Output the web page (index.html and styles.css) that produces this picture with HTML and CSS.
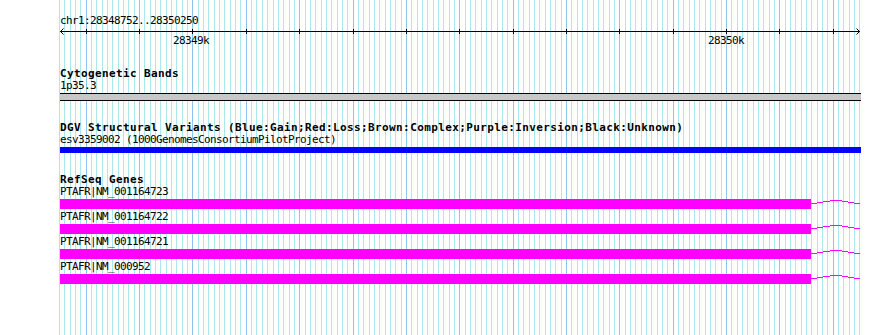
FILE: index.html
```html
<!DOCTYPE html>
<html>
<head>
<meta charset="utf-8">
<title>Browser view</title>
<link rel="stylesheet" href="styles.css">
</head>
<body>
<div class="view">
  <svg class="grid" id="grid" width="890" height="335" shape-rendering="crispEdges"></svg>
  <div class="ruler">
    <div class="loc">chr1:28348752..28350250</div>
    <svg class="axis" id="axis" width="890" height="18" shape-rendering="crispEdges">
      <line x1="60" y1="3.5" x2="860" y2="3.5" class="ax"/>
      <path d="M63.5 0.5 L60.5 3.5 L63.5 6.5 M856.5 0.5 L859.5 3.5 L856.5 6.5" class="ax" fill="none" shape-rendering="auto"/>
      <g id="ticks"></g>
      <text x="191" y="16" class="lbl" text-anchor="middle">28349k</text>
      <text x="726" y="16" class="lbl" text-anchor="middle">28350k</text>
    </svg>
  </div>

  <section class="track">
    <div class="track-title">Cytogenetic Bands</div>
    <div class="feat-label">1p35.3</div>
    <div class="band"></div>
  </section>

  <section class="track">
    <div class="track-title">DGV Structural Variants (Blue:Gain;Red:Loss;Brown:Complex;Purple:Inversion;Black:Unknown)</div>
    <div class="feat-label">esv3359002 (1000GenomesConsortiumPilotProject)</div>
    <div class="dgv-bar"></div>
  </section>

  <section class="track">
    <div class="track-title">RefSeq Genes</div>
    <div class="gene">
      <div class="feat-label gene-label">PTAFR|NM_001164723</div>
      <svg class="gene-glyph" width="801" height="10" shape-rendering="crispEdges"><rect x="0" y="0" width="751" height="10" class="exon"/><polyline points="751,5 776,1 800,5" class="intron"/></svg>
    </div>
    <div class="gene">
      <div class="feat-label gene-label">PTAFR|NM_001164722</div>
      <svg class="gene-glyph" width="801" height="10" shape-rendering="crispEdges"><rect x="0" y="0" width="751" height="10" class="exon"/><polyline points="751,5 776,1 800,5" class="intron"/></svg>
    </div>
    <div class="gene">
      <div class="feat-label gene-label">PTAFR|NM_001164721</div>
      <svg class="gene-glyph" width="801" height="10" shape-rendering="crispEdges"><rect x="0" y="0" width="751" height="10" class="exon"/><polyline points="751,5 776,1 800,5" class="intron"/></svg>
    </div>
    <div class="gene">
      <div class="feat-label gene-label">PTAFR|NM_000952</div>
      <svg class="gene-glyph" width="801" height="10" shape-rendering="crispEdges"><rect x="0" y="0" width="751" height="10" class="exon"/><polyline points="751,5 776,1 800,5" class="intron"/></svg>
    </div>
  </section>
</div>
<script src="script.js"></script>
</body>
</html>
```

FILE: styles.css
```css
html, body {
  margin: 0;
  padding: 0;
  background: #ffffff;
}
body {
  font-family: "DejaVu Sans Mono", "Liberation Mono", monospace;
  color: #000;
}
.view {
  position: relative;
  width: 890px;
  height: 335px;
  overflow: hidden;
}
.grid {
  position: absolute;
  left: 0;
  top: 0;
}
.grid .minor { stroke: #aae8ee; stroke-width: 1; }
.grid .major { stroke: #8cc4ec; stroke-width: 1; }

.ruler {
  position: relative;
  padding-top: 16px;
}
.loc, .feat-label {
  position: relative;
  font-size: 11px;
  line-height: 10px;
  padding-bottom: 2px;
  letter-spacing: -0.62px;
  white-space: nowrap;
  padding-left: 60px;
}
.axis {
  display: block;
}
.axis .ax { stroke: #000; stroke-width: 1; }
.axis .tick { stroke: #000; stroke-width: 1; }
.axis .lbl {
  font-family: "DejaVu Sans Mono", "Liberation Mono", monospace;
  font-size: 11px;
  letter-spacing: -0.62px;
  fill: #000;
}

.track {
  position: relative;
  margin-top: 23px;
}
.track + .track {
  margin-top: 22px;
}
.track-title {
  position: relative;
  font-size: 11px;
  font-weight: bold;
  line-height: 10px;
  padding-bottom: 2px;
  letter-spacing: 0.38px;
  white-space: nowrap;
  padding-left: 60px;
}
.band {
  margin-left: 60px;
  width: 801px;
  height: 6px;
  background: #c8c8c8;
  border-top: 1px solid #000;
  border-bottom: 1px solid #000;
}
.dgv-bar {
  margin-left: 60px;
  width: 801px;
  height: 6px;
  background: #0000ff;
}
.gene {
  margin-bottom: 3px;
}
.gene-label {
  z-index: 1;
}
.gene-glyph {
  display: block;
  margin-left: 60px;
}
.gene-glyph .exon { fill: #ff00ff; }
.gene-glyph .intron { fill: none; stroke: #ff00ff; stroke-width: 1; }
```

FILE: script.js
```js
(function () {
  var NS = "http://www.w3.org/2000/svg";
  var grid = document.getElementById("grid");
  var ticks = document.getElementById("ticks");
  var start = 59.1, step = 5.335;
  for (var i = 0; i <= 150; i++) {
    var x = Math.round(start + i * step) + 0.5;
    var major = (i % 10 === 5);
    var l = document.createElementNS(NS, "line");
    l.setAttribute("x1", x); l.setAttribute("x2", x);
    l.setAttribute("y1", 0); l.setAttribute("y2", 335);
    l.setAttribute("class", major ? "major" : "minor");
    grid.appendChild(l);
    if (major) {
      var t = document.createElementNS(NS, "line");
      t.setAttribute("x1", x); t.setAttribute("x2", x);
      t.setAttribute("y1", 1); t.setAttribute("y2", 6);
      t.setAttribute("class", "tick");
      ticks.appendChild(t);
    }
  }
})();
```
